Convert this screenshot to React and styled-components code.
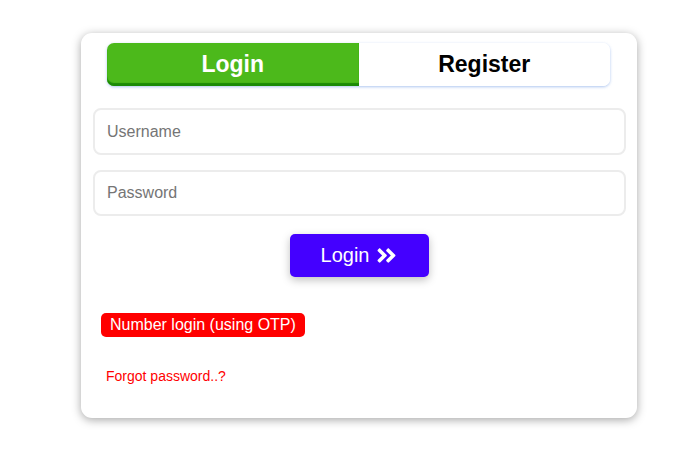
import React from 'react';
import styled, { createGlobalStyle } from 'styled-components';
import { FaAngleDoubleRight } from 'react-icons/fa';

const Global = createGlobalStyle`
    body {
        margin: 0;
        background: #fff;
        font-family: "Liberation Sans", Arial, sans-serif;
    }
`

const Page = styled.div`
    width: 700px;
    height: 450px;
    padding-top: 33px;
    box-sizing: border-box;
`

const Card = styled.div`
    margin-left: 81px;
    width: 556px;
    height: 385px;
    box-sizing: border-box;
    padding: 10px 11px 0 12px;
    background: #fff;
    border-radius: 11px;
    box-shadow: 0 2px 10px rgba(0,0,0,0.35);
`

const Tabs = styled.div`
    display: flex;
    margin: 0 16px 0 14px;
    height: 43px;
    border-radius: 7px;
    box-shadow: 0 1px 3px rgba(120,160,230,0.6);
`

const Tab = styled.div`
    flex: 1;
    display: flex;
    align-items: center;
    justify-content: center;
    font-size: 23px;
    font-weight: bold;
    color: ${p => p.active ? '#fff' : '#000'};
    background: ${p => p.active ? '#4cb91b' : '#fff'};
    border-radius: ${p => p.active ? '7px 0 0 7px' : '0 7px 7px 0'};
    box-shadow: ${p => p.active ? 'inset 0 -3px 1px #1b8a06' : 'none'};
`

const Field = styled.input`
    display: block;
    width: 100%;
    box-sizing: border-box;
    height: ${p => p.first ? '47px' : '46px'};
    margin-top: ${p => p.first ? '22px' : '15px'};
    padding: 0 12px;
    border: 2px solid #ececec;
    border-radius: 8px;
    font-family: inherit;
    font-size: 16px;
    outline: none;
    &::placeholder { color: #757575; }
`

const SubmitRow = styled.div`
    display: flex;
    justify-content: center;
    margin-top: 18px;
`

const Submit = styled.button`
    display: flex;
    align-items: center;
    gap: 6px;
    justify-content: center;
    width: 139px;
    height: 43px;
    border: none;
    border-radius: 5px;
    background: #4400ff;
    color: #fff;
    font-family: inherit;
    font-size: 20px;
    box-shadow: 0 3px 8px rgba(0,0,0,0.25);
`

const Badge = styled.span`
    display: inline-block;
    margin: 36px 0 0 8px;
    padding: 3px 9px;
    background: #ff0000;
    color: #fff;
    font-size: 16px;
    border-radius: 5px;
`

const Forgot = styled.a`
    display: block;
    margin: 31px 0 0 13px;
    color: #ff0000;
    font-size: 14px;
    text-decoration: none;
`

const App = () =>
    <Page>
        <Global />
        <Card>
            <Tabs>
                <Tab active>Login</Tab>
                <Tab>Register</Tab>
            </Tabs>
            <Field first placeholder="Username" />
            <Field placeholder="Password" type="password" />
            <SubmitRow>
                <Submit>Login <FaAngleDoubleRight size={23} /></Submit>
            </SubmitRow>
            <Badge>Number login (using OTP)</Badge>
            <Forgot href="#">Forgot password..?</Forgot>
        </Card>
    </Page>

export default App
